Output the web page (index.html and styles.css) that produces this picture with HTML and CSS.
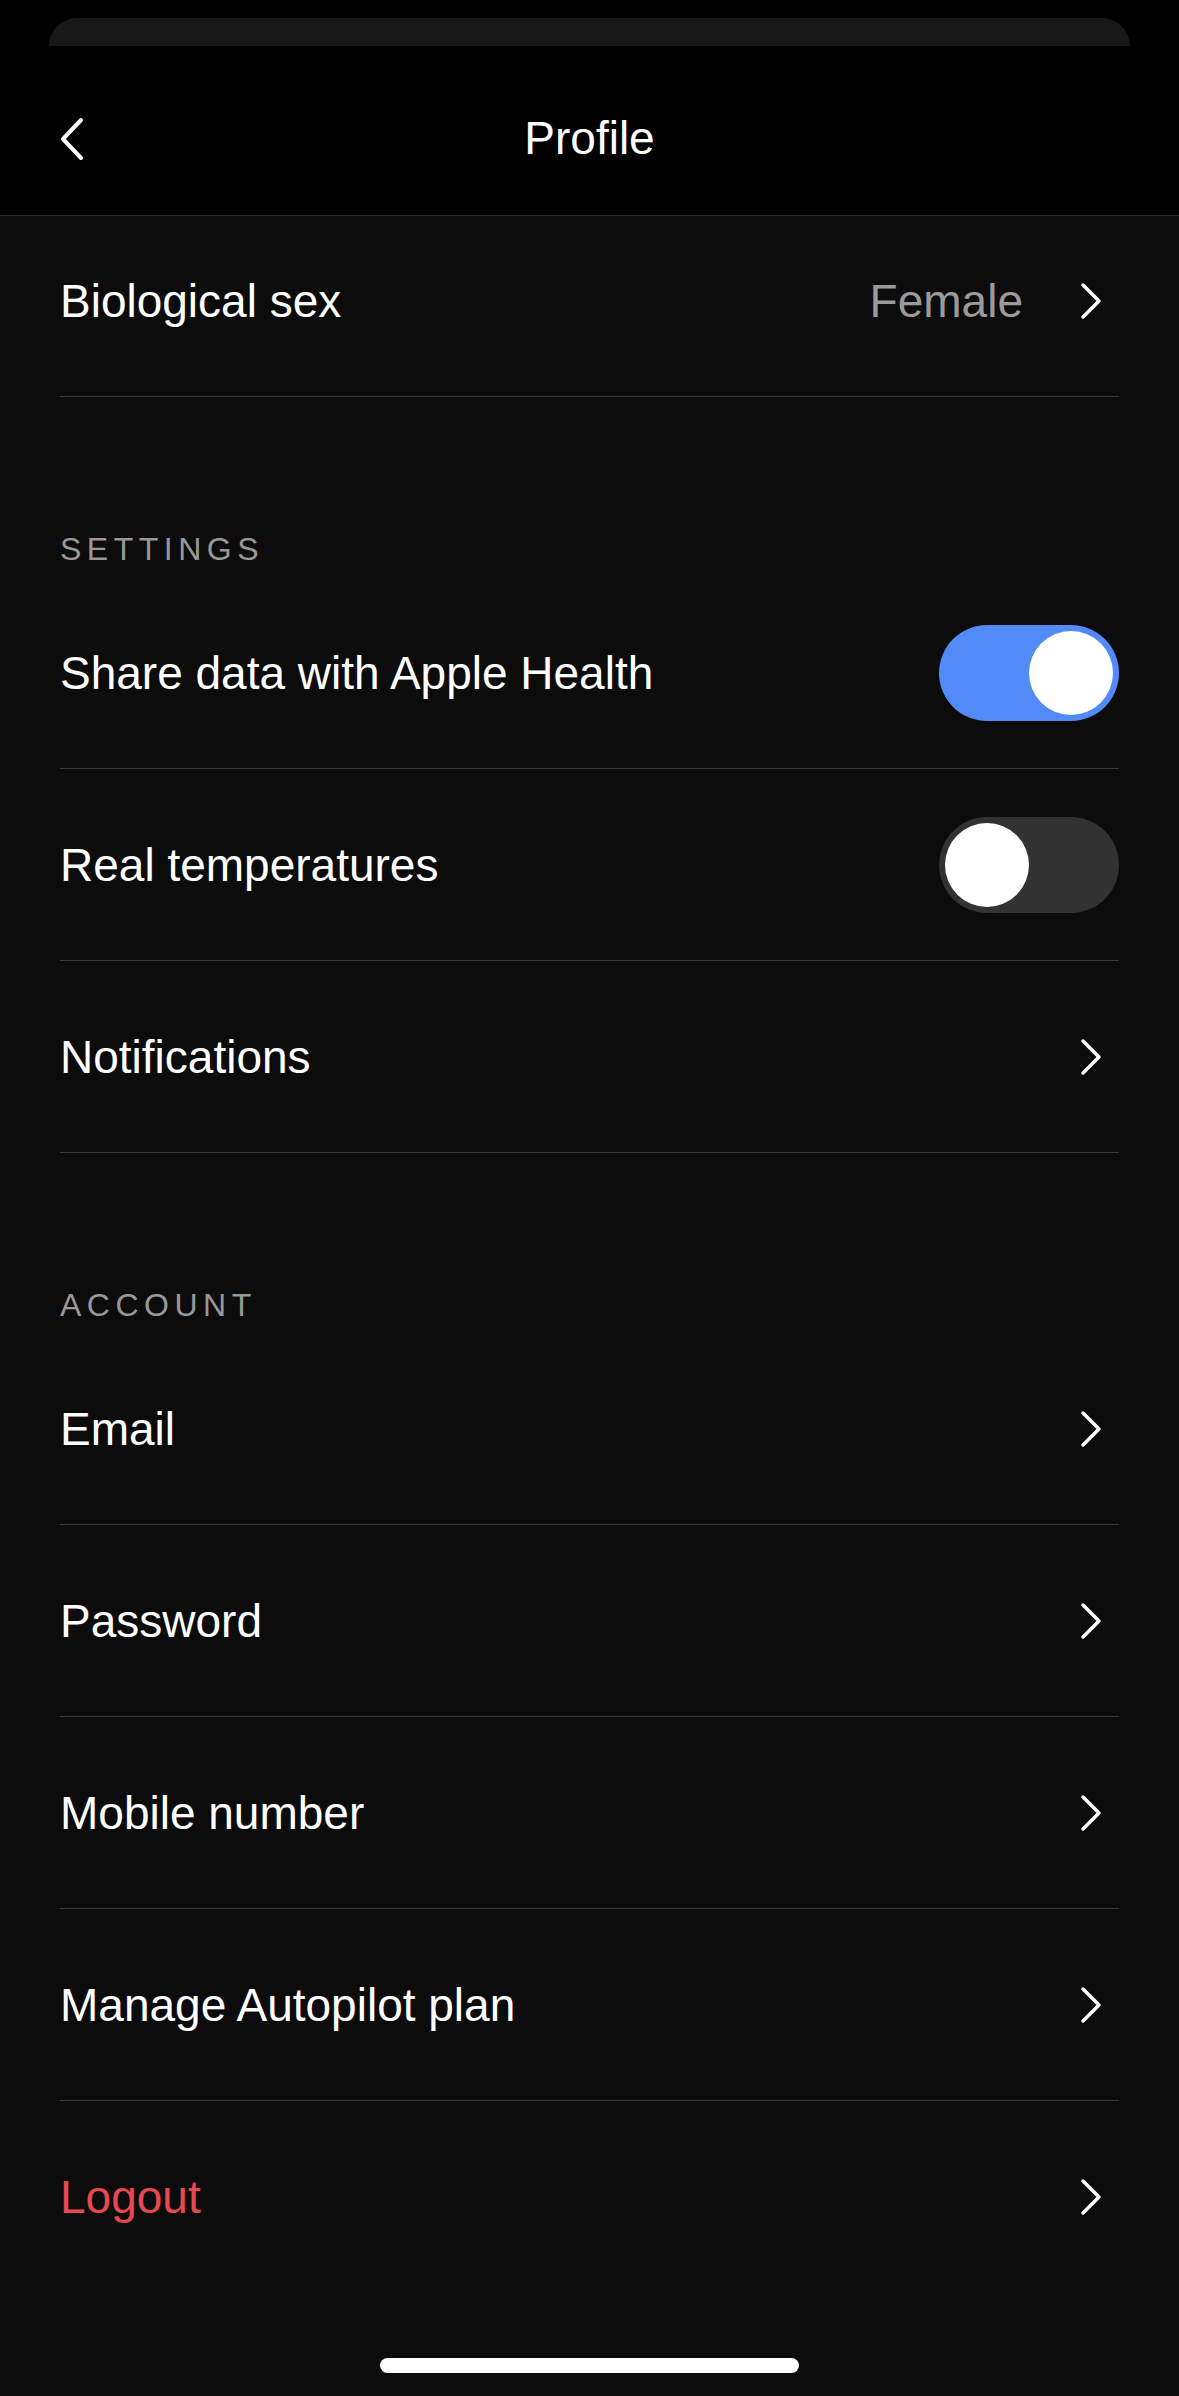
FILE: index.html
```html
<!DOCTYPE html>
<html lang="en">
<head>
  <meta charset="UTF-8">
  <meta name="viewport" content="width=device-width, initial-scale=1.0">
  <title>Profile</title>
  <link rel="stylesheet" href="styles.css">
</head>
<body>

<div class="sheet-edge"></div>

<header class="nav-bar">
  <button class="back-btn" aria-label="Back">
    <svg width="30" height="46" viewBox="0 0 30 46"><path d="M24 4 L6 23 L24 42" fill="none" stroke="#fff" stroke-width="4" stroke-linecap="round" stroke-linejoin="round"/></svg>
  </button>
  <h1>Profile</h1>
</header>

<main class="content">
  <div class="row first-row">
    <span class="label">Biological sex</span>
    <span class="value">Female</span>
    <svg class="chevron" width="26" height="40" viewBox="0 0 26 40"><path d="M5 4 L21 20 L5 36" fill="none" stroke="#fff" stroke-width="3.5" stroke-linecap="round" stroke-linejoin="round"/></svg>
  </div>

  <h2 class="section-title">Settings</h2>

  <div class="row">
    <span class="label">Share data with Apple Health</span>
    <div class="toggle on"><div class="knob"></div></div>
  </div>
  <div class="row">
    <span class="label">Real temperatures</span>
    <div class="toggle"><div class="knob"></div></div>
  </div>
  <div class="row">
    <span class="label">Notifications</span>
    <svg class="chevron" width="26" height="40" viewBox="0 0 26 40"><path d="M5 4 L21 20 L5 36" fill="none" stroke="#fff" stroke-width="3.5" stroke-linecap="round" stroke-linejoin="round"/></svg>
  </div>

  <h2 class="section-title">Account</h2>

  <div class="row">
    <span class="label">Email</span>
    <svg class="chevron" width="26" height="40" viewBox="0 0 26 40"><path d="M5 4 L21 20 L5 36" fill="none" stroke="#fff" stroke-width="3.5" stroke-linecap="round" stroke-linejoin="round"/></svg>
  </div>
  <div class="row">
    <span class="label">Password</span>
    <svg class="chevron" width="26" height="40" viewBox="0 0 26 40"><path d="M5 4 L21 20 L5 36" fill="none" stroke="#fff" stroke-width="3.5" stroke-linecap="round" stroke-linejoin="round"/></svg>
  </div>
  <div class="row">
    <span class="label">Mobile number</span>
    <svg class="chevron" width="26" height="40" viewBox="0 0 26 40"><path d="M5 4 L21 20 L5 36" fill="none" stroke="#fff" stroke-width="3.5" stroke-linecap="round" stroke-linejoin="round"/></svg>
  </div>
  <div class="row">
    <span class="label">Manage Autopilot plan</span>
    <svg class="chevron" width="26" height="40" viewBox="0 0 26 40"><path d="M5 4 L21 20 L5 36" fill="none" stroke="#fff" stroke-width="3.5" stroke-linecap="round" stroke-linejoin="round"/></svg>
  </div>
  <div class="row last-row">
    <span class="label logout">Logout</span>
    <svg class="chevron" width="26" height="40" viewBox="0 0 26 40"><path d="M5 4 L21 20 L5 36" fill="none" stroke="#fff" stroke-width="3.5" stroke-linecap="round" stroke-linejoin="round"/></svg>
  </div>

  <div class="home-area">
    <div class="home-indicator"></div>
  </div>
</main>

</body>
</html>
```

FILE: styles.css
```css
body {
  font-family: "Liberation Sans", Arial, sans-serif;
  margin: 0;
  padding: 0;
  background-color: #000;
  color: #fff;
}

/* Card peeking behind the sheet */
.sheet-edge {
  margin: 18px 49px 0;
  height: 28px;
  background-color: #181818;
  border-radius: 30px 30px 0 0;
}

/* Navigation bar */
.nav-bar {
  height: 170px;
  box-sizing: border-box;
  padding-top: 15px;
  display: flex;
  align-items: center;
  justify-content: center;
  border-bottom: 1px solid #2e2e2e;
  background-color: #000;
}

.nav-bar h1 {
  margin: 0;
  font-size: 46px;
  font-weight: normal;
}

.back-btn {
  position: absolute;
  left: 57px;
  top: 116px;
  background: none;
  border: none;
  padding: 0;
  cursor: pointer;
}

.back-btn svg {
  display: block;
}

/* Main list */
.content {
  background-color: #0c0c0c;
  padding: 0 60px;
}

.row {
  height: 192px;
  box-sizing: border-box;
  display: flex;
  align-items: center;
  border-bottom: 1.5px solid #383838;
}

.first-row {
  height: 181px;
  padding-bottom: 11px;
}

.last-row {
  border-bottom: none;
}

.label {
  flex: 1;
  font-size: 46px;
}

.logout {
  color: #e8484f;
}

.value {
  font-size: 46px;
  color: #9a9a9a;
  margin-right: 55px;
}

.chevron {
  display: block;
  margin-right: 15px;
}

.section-title {
  margin: 132px 0 8px;
  font-size: 32px;
  line-height: 40px;
  font-weight: normal;
  text-transform: uppercase;
  letter-spacing: 5.5px;
  color: #989898;
}

/* Toggles */
.toggle {
  width: 180px;
  height: 96px;
  border-radius: 48px;
  background-color: #323232;
  padding: 6px;
  box-sizing: border-box;
  display: flex;
  justify-content: flex-start;
}

.toggle.on {
  background-color: #528bf7;
  justify-content: flex-end;
}

.knob {
  width: 84px;
  height: 84px;
  border-radius: 50%;
  background-color: #fff;
}

/* Home indicator */
.home-area {
  height: 104px;
  display: flex;
  justify-content: center;
}

.home-indicator {
  margin-top: 65px;
  width: 419px;
  height: 15px;
  border-radius: 8px;
  background-color: #fff;
}
```
